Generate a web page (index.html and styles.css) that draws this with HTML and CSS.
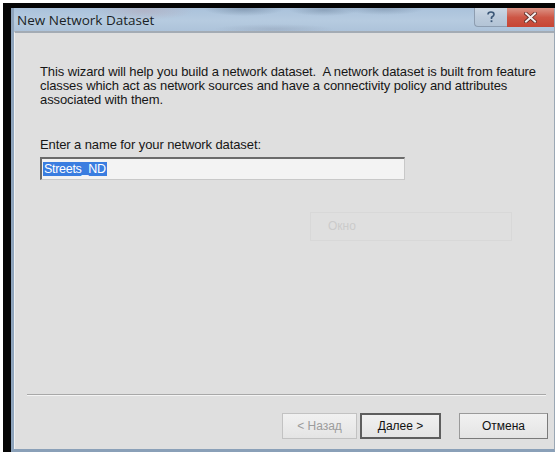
FILE: index.html
```html
<!DOCTYPE html>
<html lang="en">
<head>
<meta charset="utf-8">
<title>New Network Dataset</title>
<link rel="stylesheet" href="styles.css">
</head>
<body>
<div class="desktop">
  <div class="frame">
    <div class="window">
      <div class="titlebar">
        <span class="title">New Network Dataset</span>
        <div class="caption-buttons">
          <div class="cap-btn help">
            <svg width="10" height="12" viewBox="0 0 10 12"><path d="M2 3.5 C2 1.5 3.5 1 5 1 C6.8 1 8 2 8 3.5 C8 5 6.5 5.5 5.5 6.3 L5.5 8" fill="none" stroke="#3c5878" stroke-width="1.6"/><rect x="4.6" y="9.3" width="1.8" height="1.8" fill="#3c5878"/></svg>
          </div>
          <div class="cap-btn close">
            <svg width="13" height="11" viewBox="0 0 13 11"><path d="M2 1.5 L11 9.5 M11 1.5 L2 9.5" stroke="#5a2a24" stroke-width="3.6" stroke-linecap="square"/><path d="M2 1.5 L11 9.5 M11 1.5 L2 9.5" stroke="#f4eeee" stroke-width="2" stroke-linecap="square"/></svg>
          </div>
        </div>
      </div>
      <div class="client">
        <div class="page">
          <p class="intro">This wizard will help you build a network dataset.&nbsp; A network dataset is built from feature classes which act as network sources and have a connectivity policy and attributes associated with them.</p>
          <label class="field-label" for="nd-name">Enter a name for your network dataset:</label>
          <div class="textbox" id="nd-name"><span class="selected">Streets_ND</span></div>
          <div class="ghost-row">
            <div class="ghost-btn">Окно</div>
          </div>
        </div>
        <div class="separator"></div>
        <div class="button-row">
          <button class="btn disabled">&lt; Назад</button>
          <button class="btn default">Далее &gt;</button>
          <button class="btn cancel">Отмена</button>
        </div>
      </div>
    </div>
  </div>
</div>
</body>
</html>
```
FILE: styles.css
```css
html, body {
  margin: 0;
  padding: 0;
  background: #ffffff;
}

.desktop {
  width: 555px;
  height: 452px;
  padding: 3px 0 0 3px;
  box-sizing: border-box;
  overflow: hidden;
}

.frame {
  height: 100%;
  border-top: 5px solid #050505;
  border-left: 8px solid #050505;
  box-sizing: border-box;
  display: flex;
}

.window {
  flex: 1;
  display: flex;
  flex-direction: column;
  border-left: 3px solid #8ea4bc;
  border-bottom: 3px solid #8aa0b8;
  border-right: 1px solid #9aa7b4;
  background: #dfdfdf;
}

/* caption bar */
.titlebar {
  height: 23px;
  display: flex;
  align-items: center;
  justify-content: space-between;
  background:
    radial-gradient(ellipse 40px 7px at 230px 1px, rgba(70, 90, 115, 0.35), transparent),
    radial-gradient(ellipse 35px 6px at 310px 2px, rgba(70, 90, 115, 0.3), transparent),
    radial-gradient(ellipse 40px 6px at 370px 1px, rgba(70, 90, 115, 0.28), transparent),
    radial-gradient(ellipse 50px 9px at 130px 3px, rgba(190, 120, 120, 0.2), transparent),
    radial-gradient(ellipse 60px 5px at 260px 21px, rgba(120, 130, 150, 0.25), transparent),
    linear-gradient(to bottom, #aac2db 0%, #b6cbe0 55%, #adc3da 100%);
}

.title {
  font-family: "Open Sans", "Noto Sans", sans-serif;
  font-size: 13.5px;
  color: #1a1f26;
  padding-left: 3px;
  padding-top: 1px;
}

.caption-buttons {
  display: flex;
  align-self: flex-start;
  height: 20px;
}

.cap-btn {
  display: flex;
  align-items: center;
  justify-content: center;
  height: 19px;
  box-sizing: border-box;
}

.cap-btn.help {
  width: 33px;
  border: 1px solid #8d9db0;
  border-top: none;
  border-right: none;
  border-radius: 0 0 0 4px;
  background: linear-gradient(to bottom, #ccd8e5, #bccbdb 50%, #b3c4d6);
}

.cap-btn.close {
  width: 47px;
  background: linear-gradient(to bottom, #dc9486, #cd5645 50%, #c64534);
}

/* client area */
.client {
  flex: 1;
  display: flex;
  flex-direction: column;
  border-top: 2px solid #a3abb4;
  border-left: 1px solid #f0f0f0;
  font-family: "Liberation Sans", Arial, sans-serif;
  font-size: 13px;
  color: #161616;
}

.page {
  flex: 1;
  padding: 32px 14px 0 25px;
}

.intro {
  margin: 0;
  line-height: 14px;
  letter-spacing: -0.1px;
}

.field-label {
  display: block;
  margin-top: 31px;
  line-height: 14px;
  letter-spacing: -0.1px;
}

.textbox {
  margin-top: 5px;
  width: 365px;
  height: 23px;
  box-sizing: border-box;
  border: 1px solid #c8c8c8;
  border-top: 2px solid #6b6b6b;
  border-left: 2px solid #6b6b6b;
  background: #f3f3f3;
  padding: 2px 1px;
  line-height: 16px;
}

.selected {
  background: #3a7de0;
  color: #ffffff;
  padding: 0 1px;
  font-size: 12.5px;
  letter-spacing: -0.3px;
}

.ghost-row {
  display: flex;
  justify-content: flex-end;
  margin-top: 32px;
  padding-right: 28px;
}

.ghost-btn {
  width: 202px;
  height: 29px;
  box-sizing: border-box;
  border: 1px solid #d8d8d8;
  color: #cbcbcb;
  font-size: 12px;
  line-height: 27px;
  padding-left: 17px;
}

.separator {
  height: 0;
  margin: 0 8px 0 12px;
  border-top: 1px solid #a8a8a8;
  border-bottom: 1px solid #f4f4f4;
}

.button-row {
  display: flex;
  justify-content: flex-end;
  padding: 17px 6px 10px 0;
  gap: 3px;
}

.btn {
  font-family: "Liberation Sans", Arial, sans-serif;
  font-size: 12px;
  height: 26px;
  margin: 0;
  padding: 0;
  background: linear-gradient(to bottom, #f1f1f1, #e4e4e4);
  border: 1px solid #9a9a9a;
  border-right-color: #7a7a7a;
  border-bottom-color: #7a7a7a;
  color: #111;
}

.btn.disabled {
  width: 75px;
  color: #9c9c9c;
  border-color: #c2c2c2;
}

.btn.default {
  width: 81px;
  border: 2px solid #5e5e5e;
}

.btn.cancel {
  width: 89px;
  margin-left: 15px;
}
```
